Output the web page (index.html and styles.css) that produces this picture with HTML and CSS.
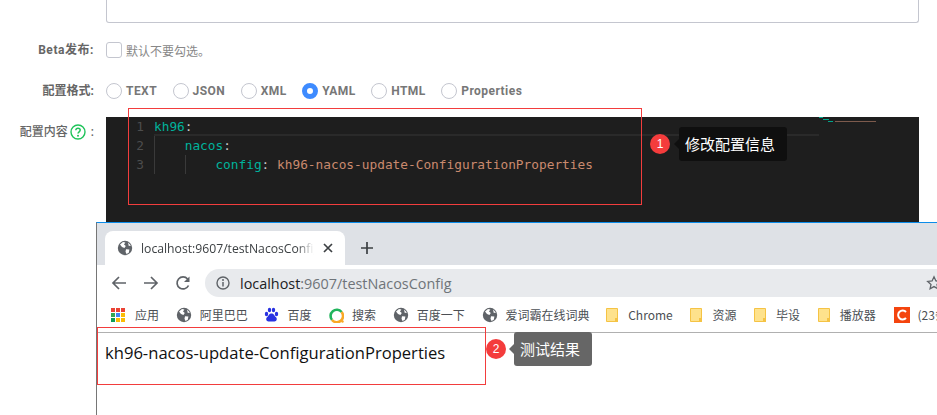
FILE: index.html
```html
<!DOCTYPE html>
<html lang="zh">
<head>
<meta charset="utf-8">
<title>Nacos</title>
<link rel="stylesheet" href="styles.css">
</head>
<body>
<svg class="defs" width="0" height="0">
  <symbol id="globe" viewBox="0 0 16 16"><circle cx="8" cy="8" r="7.2" fill="#5f6368"/><path d="M3 4.500l3-2.600 2.400.5L7 4.600 8.800 6 7.400 8 5 7zM9 9.200l3.400.3-.6 3.200-2.300 1.200-1-2.200zM11 2.500l3 3-2.200.6z" fill="#fff"/></symbol>
  <symbol id="folder" viewBox="0 0 12 14"><path d="M.5.5h11v13H.5z" fill="#fee28c" stroke="#f5c344"/><path d="M9 10h3v4H9z" fill="#f5c344"/></symbol>
</svg>

<main class="form">
  <div class="textarea"></div>
  <div class="row beta">
    <label class="label">Beta发布:</label>
    <span class="checkbox"></span>
    <span class="hint">默认不要勾选。</span>
  </div>
  <div class="row format">
    <label class="label">配置格式:</label>
    <div class="radios">
      <span class="radio"><i></i>TEXT</span>
      <span class="radio"><i></i>JSON</span>
      <span class="radio"><i></i>XML</span>
      <span class="radio on"><i></i>YAML</span>
      <span class="radio"><i></i>HTML</span>
      <span class="radio"><i></i>Properties</span>
    </div>
  </div>
  <div class="row content">
    <label class="label">配置内容
      <svg class="help" width="16" height="16" viewBox="0 0 16 16"><circle cx="8" cy="8" r="7" fill="#fff" stroke="#1fc35a" stroke-width="1.400"/><path d="M5.800 6.200C5.900 4.900 6.800 4.200 8 4.200s2.200.8 2.200 1.900c0 1.700-2.200 1.700-2.200 3.500" fill="none" stroke="#1fc35a" stroke-width="1.500"/><circle cx="8" cy="11.700" r="1" fill="#1fc35a"/></svg>
      <span class="colon">:</span></label>
    <div class="editor">
      <div class="gutter"><span>1</span><span>2</span><span>3</span></div>
      <div class="code">
        <div class="line cur"><span class="k">kh96</span><span class="p">:</span></div>
        <div class="line"><span class="guide"></span><span class="k">nacos</span><span class="p">:</span></div>
        <div class="line"><span class="guide"></span><span class="guide"></span><span class="k">config</span><span class="p">: </span><span class="s">kh96-nacos-update-ConfigurationProperties</span></div>
      </div>
      <svg class="minimap" width="58" height="7" viewBox="0 0 58 7"><path d="M0 .5h4M4 2.500h6M9 4.500h5" stroke="#00a68c"/><path d="M16 4.500h41" stroke="#7d5a4c"/></svg>
    </div>
  </div>
</main>

<section class="browser">
  <div class="tabstrip">
    <div class="tab">
      <svg class="tabicon" width="16" height="16"><use href="#globe"/></svg>
      <span class="tabtitle">localhost:9607/testNacosConfig</span>
      <svg class="tabclose" width="10" height="10" viewBox="0 0 10 10"><path d="M1 1l8 8M9 1l-8 8" stroke="#3c4043" stroke-width="1.700"/></svg>
    </div>
    <svg class="newtab" width="14" height="14" viewBox="0 0 14 14"><path d="M7 1v12M1 7h12" stroke="#3c4043" stroke-width="1.700"/></svg>
  </div>
  <div class="toolbar">
    <svg width="16" height="16" viewBox="0 0 16 16"><path d="M15 8H2M8 2L2 8l6 6" fill="none" stroke="#5f6368" stroke-width="1.700"/></svg>
    <svg width="16" height="16" viewBox="0 0 16 16"><path d="M1 8h13M8 2l6 6-6 6" fill="none" stroke="#5f6368" stroke-width="1.700"/></svg>
    <svg width="16" height="16" viewBox="0 0 16 16"><path d="M13.500 10.500A6 6 0 1 1 12.600 4" fill="none" stroke="#5f6368" stroke-width="1.700"/><path d="M14.500 1.500v5.500H9z" fill="#5f6368"/></svg>
    <div class="omnibox">
      <svg width="14" height="14" viewBox="0 0 14 14"><circle cx="7" cy="7" r="6" fill="none" stroke="#5f6368" stroke-width="1.400"/><path d="M7 6v4.500" stroke="#5f6368" stroke-width="1.500"/><circle cx="7" cy="4" r="1" fill="#5f6368"/></svg>
      <span class="url"><b>localhost</b>:9607/testNacosConfig</span>
      <svg class="star" width="16" height="16" viewBox="0 0 16 16"><path d="M8 1.800l1.900 4.100 4.400.5-3.300 3 .9 4.400L8 11.600l-3.900 2.200.9-4.400-3.300-3 4.400-.5z" fill="none" stroke="#5f6368" stroke-width="1.300"/></svg>
    </div>
  </div>
  <div class="bookmarks">
    <span class="bm apps">
      <svg width="14" height="14" viewBox="0 0 14 14"><path d="M0 0h4v4H0z" fill="#ea4335"/><path d="M5 0h4v4H5z" fill="#ea4335"/><path d="M10 0h4v4h-4z" fill="#ea4335"/><path d="M0 5h4v4H0z" fill="#34a853"/><path d="M5 5h4v4H5z" fill="#4285f4"/><path d="M10 5h4v4h-4z" fill="#fbbc05"/><path d="M0 10h4v4H0z" fill="#0f9d58"/><path d="M5 10h4v4H5z" fill="#fbbc05"/><path d="M10 10h4v4h-4z" fill="#fbbc05"/></svg>
      应用</span>
    <span class="bm"><svg width="16" height="16"><use href="#globe"/></svg>阿里巴巴</span>
    <span class="bm"><svg width="15" height="16" viewBox="0 0 15 16"><g fill="#2932e1"><ellipse cx="2.500" cy="7" rx="1.700" ry="2.200"/><ellipse cx="5.500" cy="3" rx="1.700" ry="2.200"/><ellipse cx="9.500" cy="3" rx="1.700" ry="2.200"/><ellipse cx="12.500" cy="7" rx="1.700" ry="2.200"/><path d="M7.500 6.500c2.500 0 3 2.500 4.500 3.800 1.500 1.400.7 4.200-1.500 4.200H4.500C2.300 14.500 1.500 11.700 3 10.300 4.500 9 5 6.500 7.500 6.500z"/></g></svg>百度</span>
    <span class="bm"><svg width="16" height="16" viewBox="0 0 16 16"><path d="M4 13A6 6 0 1 1 13.600 5" fill="none" stroke="#21b45c" stroke-width="2.600"/><path d="M13.600 5A6 6 0 0 1 4 13" fill="none" stroke="#f9a825" stroke-width="2.600"/><circle cx="14.500" cy="14.500" r="1.200" fill="#f9a825"/></svg>搜索</span>
    <span class="bm"><svg width="16" height="16"><use href="#globe"/></svg>百度一下</span>
    <span class="bm"><svg width="16" height="16"><use href="#globe"/></svg>爱词霸在线词典</span>
    <span class="bm wide"><svg width="12" height="14"><use href="#folder"/></svg>Chrome</span>
    <span class="bm wide"><svg width="12" height="14"><use href="#folder"/></svg>资源</span>
    <span class="bm wide"><svg width="12" height="14"><use href="#folder"/></svg>毕设</span>
    <span class="bm wide"><svg width="12" height="14"><use href="#folder"/></svg>播放器</span>
    <span class="bm"><svg width="16" height="16" viewBox="0 0 16 16"><path d="M0 0h16v16H0z" fill="#f4440e"/><path d="M12 5a4.500 4.500 0 1 0 0 6" fill="none" stroke="#fff" stroke-width="2"/></svg>(23条消息)</span>
  </div>
  <div class="pagebody">kh96-nacos-update-ConfigurationProperties</div>
</section>

<div class="mark mark-editor"></div>
<div class="mark mark-result"></div>

<div class="note note-one"><span class="badge">1</span><span class="tip">修改配置信息</span></div>
<div class="note note-two"><span class="badge">2</span><span class="tip">测试结果</span></div>
</body>
</html>
```

FILE: styles.css
```css
* { box-sizing: border-box; }
html, body { margin: 0; height: 415px; overflow: hidden; background: #fff; }
body { position: relative; font-family: "Noto Sans CJK SC", "Liberation Sans", sans-serif; }
.defs { position: absolute; }

.form { display: flex; flex-direction: column; padding-right: 18px; }
.textarea { height: 23px; margin-left: 106px; border: 1px solid #c4c6cf; border-top: 0; border-radius: 0 0 3px 3px; }
.row { display: flex; align-items: center; }
.label { width: 106px; padding-right: 12px; text-align: right; font-size: 12px; font-weight: 700; color: #666; line-height: 16px; white-space: nowrap; flex: none; font-family: Roboto, "Noto Sans CJK SC", sans-serif; }
.beta { margin-top: 18px; height: 18px; }
.beta .label { letter-spacing: .55px; }
.format { margin-top: 23px; height: 18px; }
.checkbox { width: 16px; height: 16px; border: 1px solid #c4c6cf; border-radius: 3px; flex: none; }
.hint { margin-left: 4px; font-size: 12px; color: #888; }
.radios { display: flex; gap: 15.5px; }
.radio { display: flex; align-items: center; gap: 4px; font-size: 12px; font-weight: 700; color: #777; font-family: Roboto, sans-serif; letter-spacing: .45px; }
.radio i { width: 16px; height: 16px; border-radius: 50%; border: 1px solid #c4c6cf; background: #fff; flex: none; }
.radio.on i { border: 5px solid #3e8bff; }

.content { margin-top: 17px; align-items: flex-start; }
.content .label { padding-top: 7px; padding-right: 12px; display: flex; align-items: center; justify-content: flex-end; gap: 2px; font-weight: 500; }
.colon { margin-left: 3px; }
.help { flex: none; }
.editor { position: relative; flex: 1; height: 105px; background: #1e1e1e; display: flex; font-family: "DejaVu Sans Mono", monospace; font-size: 12.8px; line-height: 19px; overflow: hidden; padding-top: 0; }
.gutter { width: 48px; flex: none; display: flex; flex-direction: column; align-items: flex-end; padding-right: 10px; color: #4d4d4d; }
.code { flex: 1; padding-right: 100px; }
.line { display: flex; height: 19px; white-space: pre; }
.line.cur { background: linear-gradient(to bottom, transparent 17px, #2a2a2a 17px, #2a2a2a 19px); }
.guide { width: 30.7px; flex: none; border-left: 1px solid #3a3a3a; }
.k { color: #00b29b; }
.p { color: #c8c8c8; }
.s { color: #ca8a6e; }
.minimap { position: absolute; top: 0; left: 713px; }

.browser { position: absolute; left: 96px; top: 222px; width: 841px; height: 193px; border-top: 1px solid #0c8ce9; border-left: 1px solid #767676; display: flex; flex-direction: column; background: #fff; font-family: "Noto Sans CJK SC", sans-serif; }
.tabstrip { height: 42px; background: #dee1e6; display: flex; align-items: flex-end; padding-left: 8px; flex: none; }
.tab { width: 240px; height: 34px; background: #fff; border-radius: 8px 8px 0 0; display: flex; align-items: center; padding: 0 12px; gap: 9px; flex: none; }
.tabicon, .tabclose { flex: none; }
.tabtitle { width: 174px; margin-left: -1px; overflow: hidden; white-space: nowrap; font-family: "Open Sans", sans-serif; font-size: 12.2px; color: #3c4043; mask-image: linear-gradient(to right, #000 90%, transparent 100%); }
.newtab { margin: 0 0 10px 15px; }
.toolbar { height: 32px; display: flex; align-items: center; gap: 16px; padding: 4px 0 0 14px; flex: none; }
.toolbar > svg { flex: none; }
.omnibox { flex: 1; margin-left: -2px; height: 28px; background: #e8eaed; border-radius: 14px 0 0 14px; display: flex; align-items: center; padding-left: 11px; gap: 10px; position: relative; }
.url { font-family: "Open Sans", sans-serif; font-size: 14.4px; color: #6f7479; }
.url b { font-weight: 400; color: #202124; }
.star { position: absolute; left: 721px; top: 6px; }
.bookmarks { height: 36px; display: flex; align-items: center; gap: 16.7px; padding-left: 14px; border-bottom: 1px solid #b0b0b0; flex: none; white-space: nowrap; overflow: hidden; }
.bm { display: flex; align-items: center; gap: 8px; font-size: 12px; color: #4b4f54; flex: none; }
.bm.apps { gap: 10px; }
.bm.wide { gap: 10px; margin-right: 1px; }
.pagebody { padding: 8px 0 0 8px; font-family: "Open Sans", sans-serif; font-size: 16.6px; line-height: 24px; color: #111; }

.mark { position: absolute; border: 1px solid #f23d3d; }
.mark-editor { left: 128px; top: 108px; width: 514px; height: 97px; }
.mark-result { left: 97px; top: 327px; width: 389px; height: 58px; }

.note { position: absolute; display: flex; align-items: center; }
.note-one { left: 650px; top: 127px; }
.note-two { left: 486px; top: 332px; }
.badge { width: 20px; height: 20px; border-radius: 50%; background: #f43c3c; color: #fff; font: 12px/20px "Liberation Sans", sans-serif; text-align: center; flex: none; }
.tip { position: relative; margin-left: 9px; height: 34px; padding: 0 12px 0 6px; border-radius: 3px; font-size: 15px; line-height: 33px; color: #fff; white-space: nowrap; }
.tip::before { content: ""; position: absolute; left: -5px; top: 12px; border: 5px solid transparent; border-left: 0; border-right-color: inherit; }
.note-one .tip { background: #0f0f0f; border-color: #0f0f0f; }
.note-two .tip { background: #666; border-color: #666; margin-left: 8px; padding: 0 12px 0 6px; }
```
